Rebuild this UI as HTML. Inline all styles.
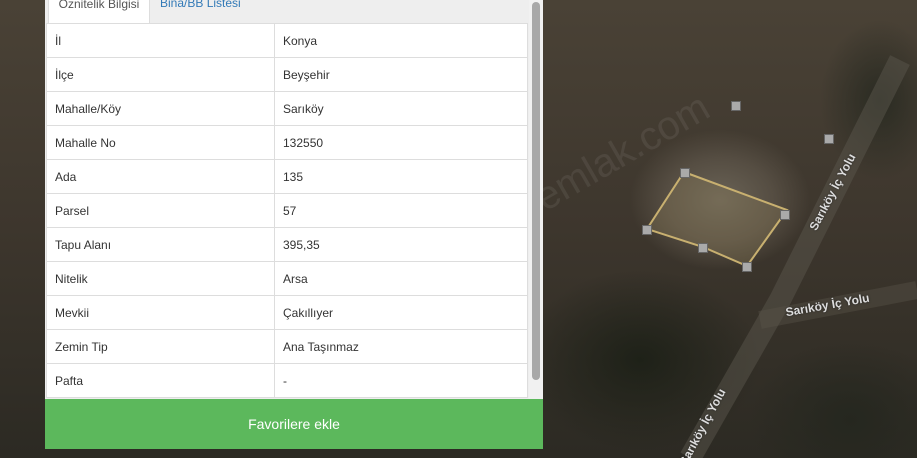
<!DOCTYPE html>
<html><head><meta charset="utf-8"><style>
html,body{margin:0;width:917px;height:458px;overflow:hidden}
body{background:#3b352d;font-family:"Liberation Sans",sans-serif;position:relative}
.map{position:absolute;inset:0;background:
radial-gradient(ellipse 90px 70px at 720px 200px,#6a6356 0%,#554d42 60%,transparent 100%),
radial-gradient(ellipse 120px 90px at 640px 360px,#1e2118 0%,transparent 100%),
radial-gradient(ellipse 100px 80px at 850px 420px,#25271f 0%,transparent 100%),
radial-gradient(ellipse 60px 80px at 880px 100px,#2a2b22 0%,transparent 100%),
linear-gradient(180deg,#4a4236 0%,#3d362d 50%,#2c2a23 100%)}
.panel{position:absolute;left:45px;top:0;width:498px;height:449px;background:#eee}
.tab{position:absolute;top:-8px;left:3px;width:100px;height:31px;background:#fff;border:1px solid #ddd;border-bottom:none;font-size:12px;color:#555;text-align:center;line-height:22px}
.tab2{position:absolute;top:-8px;left:115px;font-size:12px;color:#337ab7;line-height:22px}
table{position:absolute;left:1px;top:23px;width:482px;border-collapse:collapse;background:#fff;font-size:12px;color:#333}
td{border:1px solid #ddd;height:34px;padding:0 8px;box-sizing:border-box}
td:first-child{width:228px}
.sb{position:absolute;left:484px;top:0;width:14px;height:399px;background:#f1f1f1}
.thumb{position:absolute;left:3px;top:2px;width:8px;height:378px;background:#a8a8a8;border-radius:4px}
.btn{position:absolute;left:0;top:399px;width:498px;height:50px;background:#5cb85c;color:#fff;font-size:14px;text-align:center;line-height:50px}
.lbl{position:absolute;color:#ddd;font-size:12px;font-weight:bold;text-shadow:0 0 2px #222;white-space:nowrap}
.pt{position:absolute;width:8px;height:8px;background:#aaa;border:1px solid #666}
</style></head><body>
<div class="map"></div>
<svg style="position:absolute;left:0;top:0" width="917" height="458">
<polygon points="684,172 787,210 747,266 703,247 647,229" fill="#8a7a58" fill-opacity=".35" stroke="#c8b070" stroke-width="2"/>
<path d="M690 458 L780 300 L900 60" stroke="#5a564c" stroke-width="22" fill="none" opacity=".5"/>
<path d="M760 320 L917 290" stroke="#5a564c" stroke-width="18" fill="none" opacity=".4"/>
<text x="0" y="0" transform="translate(545,212) rotate(-30)" fill="#fff" fill-opacity=".07" font-size="40" font-family="Liberation Sans">emlak.com</text>
</svg>
<div class="pt" style="left:731px;top:101px"></div><div class="pt" style="left:824px;top:134px"></div>
<div class="pt" style="left:680px;top:168px"></div><div class="pt" style="left:642px;top:225px"></div>
<div class="pt" style="left:698px;top:243px"></div><div class="pt" style="left:742px;top:262px"></div>
<div class="pt" style="left:780px;top:210px"></div>
<div class="lbl" style="left:790px;top:185px;transform:rotate(-62deg)">Sarıköy İç Yolu</div>
<div class="lbl" style="left:785px;top:298px;transform:rotate(-10deg)">Sarıköy İç Yolu</div>
<div class="lbl" style="left:660px;top:420px;transform:rotate(-62deg)">Sarıköy İç Yolu</div>
<div class="panel">
<div class="tab">Öznitelik Bilgisi</div><div class="tab2">Bina/BB Listesi</div>
<table>
<tr><td>İl</td><td>Konya</td></tr>
<tr><td>İlçe</td><td>Beyşehir</td></tr>
<tr><td>Mahalle/Köy</td><td>Sarıköy</td></tr>
<tr><td>Mahalle No</td><td>132550</td></tr>
<tr><td>Ada</td><td>135</td></tr>
<tr><td>Parsel</td><td>57</td></tr>
<tr><td>Tapu Alanı</td><td>395,35</td></tr>
<tr><td>Nitelik</td><td>Arsa</td></tr>
<tr><td>Mevkii</td><td>Çakıllıyer</td></tr>
<tr><td>Zemin Tip</td><td>Ana Taşınmaz</td></tr>
<tr><td>Pafta</td><td>-</td></tr>
</table>
<div class="sb"><div class="thumb"></div></div>
<div class="btn">Favorilere ekle</div>
</div>
</body></html>
